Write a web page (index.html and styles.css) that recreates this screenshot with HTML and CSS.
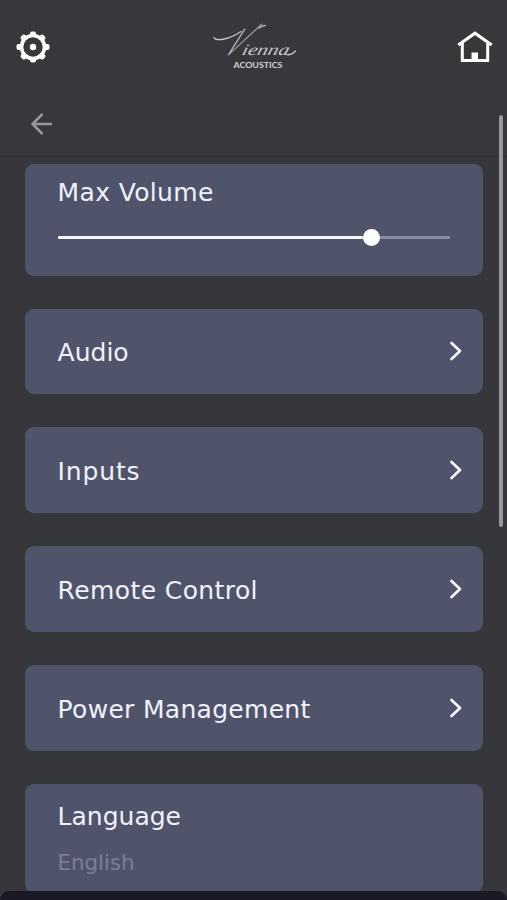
FILE: index.html
```html
<!DOCTYPE html>
<html lang="en">
<head>
<meta charset="utf-8">
<title>Vienna Acoustics Settings</title>
<link rel="stylesheet" href="styles.css">
</head>
<body>
<div class="app">
  <header class="top">
    <svg class="gear" viewBox="0 0 34 34" width="34" height="34">
      <g fill="#fff">
        <rect x="14" y="1.5" width="6" height="31" rx="2"/><rect x=".5" y="14" width="33" height="6" rx="2"/>
        <g transform="rotate(45 17 17)"><rect x="14" y="1.2" width="6" height="31.6" rx="2"/><rect x="1.2" y="14" width="31.6" height="6" rx="2"/></g>
        <circle cx="17" cy="17" r="13.3"/>
      </g>
      <circle cx="17" cy="17" r="9.7" fill="#37383c"/>
      <circle cx="17" cy="17" r="3.2" fill="#fff"/>
    </svg>
    <svg class="logo" viewBox="-10 -20 110 76" width="110" height="76">
      <g class="script">
        <text class="initial" transform="matrix(3 -.86 -3.6 4.1 8.2 38)" font-size="10">V</text>
        <text transform="translate(31 35.3) skewX(-16)" font-size="16" textLength="47" lengthAdjust="spacingAndGlyphs">ienna</text>
      </g>
      <path class="swash" d="M4 17.500C6 22 20 19 31 11.500M49 8Q53 5.300 55.500 5.300M77 34.800Q82 35 85.500 31"/>
      <text class="brand" x="23.500" y="48.400" textLength="49" lengthAdjust="spacingAndGlyphs">ACOUSTICS</text>
    </svg>
    <svg class="home" viewBox="0 0 36 34" width="36" height="34" fill="none" stroke="#fff">
      <path d="M1.300 15 18 3.200 34.700 15" stroke-width="3.100"/>
      <path d="M5.300 12V30.500H30.700V12" stroke-width="3"/>
      <rect x="14.500" y="22.500" width="6.500" height="8" fill="#fff" stroke="none"/>
    </svg>
  </header>
  <nav class="back">
    <svg viewBox="0 0 24 24" width="24" height="24" fill="none" stroke="#97989b" stroke-width="2.500"><path d="M13.500 2 3.500 12 13.500 22M3.500 12H23"/></svg>
  </nav>
  <main class="list">
    <section class="card volume">
      <h2>Max Volume</h2>
      <div class="track"><div class="fill"></div><div class="thumb"></div></div>
    </section>
    <section class="card row"><h2>Audio</h2><svg class="chev" viewBox="0 0 14 22"><path d="M2.500 3 11 11 2.500 19"/></svg></section>
    <section class="card row"><h2 class="inputs">Inputs</h2><svg class="chev" viewBox="0 0 14 22"><path d="M2.500 3 11 11 2.500 19"/></svg></section>
    <section class="card row"><h2 class="remote">Remote Control</h2><svg class="chev" viewBox="0 0 14 22"><path d="M2.500 3 11 11 2.500 19"/></svg></section>
    <section class="card row"><h2 class="power">Power Management</h2><svg class="chev" viewBox="0 0 14 22"><path d="M2.500 3 11 11 2.500 19"/></svg></section>
    <section class="card language"><h2>Language</h2><p>English</p></section>
  </main>
  <div class="scrollbar"></div>
  <div class="sheet"></div>
</div>
</body>
</html>
```
FILE: styles.css
```css
* { box-sizing: border-box; margin: 0; }
body { background: #35373a; font-family: "DejaVu Sans", Verdana, sans-serif; }
.app { position: relative; height: 900px; overflow: hidden; }
.top { height: 96px; padding: 0 14px 0 16px; display: flex; justify-content: space-between; align-items: flex-start; background: #37383c; }
.gear { margin-top: 30px; }
.logo { margin: 0 0 0 2px; }
.home { margin-top: 30px; }
.script { font-family: "Liberation Serif", serif; font-style: italic; fill: #c9c9cb; }
.initial { font-family: Lato, sans-serif; font-style: normal; font-weight: 300; }
.swash { fill: none; stroke: #c4c4c7; stroke-width: 1.3; stroke-linecap: round; }
.brand { font: 700 7.4px Lato, sans-serif; fill: #d5d5d8; }
.back { height: 61px; padding: 16px 0 0 29px; background: #37383c; border-bottom: 1px solid #303135; }
.back svg { display: block; }
.list { display: flex; flex-direction: column; gap: 33px; padding: 7px 24px 0 25px; }
.card { flex: none; height: 85.75px; padding: 0 20px 0 32.6px; border-radius: 9px; background: #50546b; }
h2 { font-size: 25px; line-height: 30px; font-weight: 400; color: #f0f2fc; white-space: nowrap; }
.volume { height: 111.6px; padding: 14px 33px 0; }
.volume h2 { margin-left: -0.4px; letter-spacing: 0.35px; }
.inputs { letter-spacing: 0.85px; }
.remote { letter-spacing: 0.4px; }
.power { letter-spacing: 0.3px; }
.track { display: flex; align-items: center; height: 18px; margin-top: 20px; background: linear-gradient(#888ba2, #888ba2) center / 100% 3px no-repeat; }
.fill { width: 305px; height: 3px; border-radius: 2px; background: #f7f8ff; }
.thumb { width: 17px; height: 17px; border-radius: 50%; background: #fff; }
.row { display: flex; align-items: center; justify-content: space-between; }
.row h2 { padding-top: 4px; }
.chev { width: 14px; height: 22px; fill: none; stroke: #f7f8fd; stroke-width: 2.7; stroke-linecap: round; stroke-linejoin: round; }
.language { height: 109px; padding-top: 18px; }
.language p { margin-top: 18px; font-size: 21.3px; line-height: 26px; color: #7b7e95; }
.scrollbar { position: absolute; top: 115px; right: 4px; width: 4px; height: 412px; border-radius: 2px; background: #98999c; }
.sheet { position: absolute; left: 0; right: 0; bottom: 0; height: 9px; border-radius: 9px 9px 0 0; background: #1a1a26; }
```
